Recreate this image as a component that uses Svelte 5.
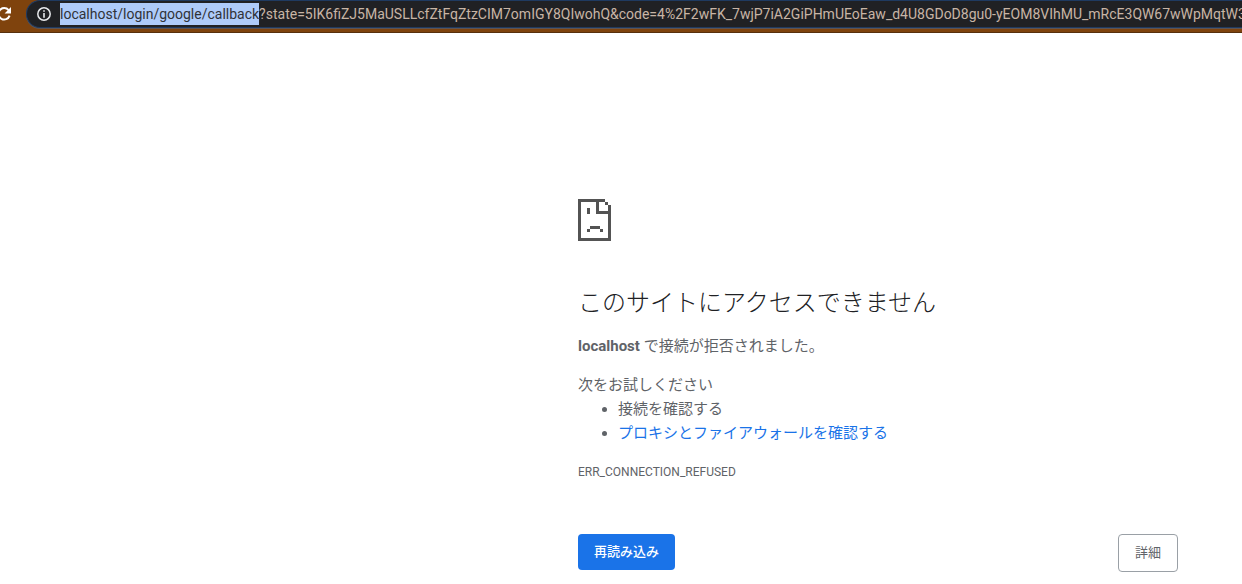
<script>
  import { onMount } from 'svelte';

  const address = 'localhost/login/google/callback';
  const query =
    '?state=5IK6fiZJ5MaUSLLcfZtFqZtzCIM7omIGY8QIwohQ&code=4%2F2wFK_7wjP7iA2GiPHmUEoEaw_d4U8GDoD8gu0-yEOM8VIhMU_mRcE3QW67wWpMqtW3-t';

  let field;

  onMount(() => {
    field.focus({ preventScroll: true });
    field.setSelectionRange(0, address.length, 'backward');
    field.scrollLeft = 0;
  });
</script>

<div class="toolbar">
  <button class="reload" aria-label="再読み込み">
    <svg width="16" height="28" viewBox="0 0 16 28">
      <path d="M12.6 10.2A5.7 5.7 0 1 0 13.6 15.6" fill="none" stroke="#fff" stroke-width="2" />
      <path d="M15 7v6.4H8.6z" fill="#fff" />
    </svg>
  </button>
  <div class="omnibox">
    <svg class="info" width="14" height="14" viewBox="0 0 14 14" aria-hidden="true">
      <circle cx="7" cy="7" r="6.2" fill="none" stroke="#e8eaed" stroke-width="1.5" />
      <path d="M6.2 3.2h1.6v1.6H6.2zM6.2 6.1h1.6v4.6H6.2z" fill="#e8eaed" />
    </svg>
    <input bind:this={field} type="text" aria-label="アドレス" spellcheck="false" value={address + query} />
  </div>
</div>

<main>
  <svg class="sad" width="33" height="42" viewBox="0 0 33 42" shape-rendering="crispEdges" aria-hidden="true">
    <path
      fill="#535353"
      d="M0 0h27v3h-6v9h12v30H0zM3 3v36h27V15H18V3zM27 3h3v3h-3zM30 6h3v6h-3zM9 9h3v6H9zM12 27h10v3H12zM9 30h3v3H9zM22 30h3v3h-3z"
    />
  </svg>
  <h1>このサイトにアクセスできません</h1>
  <p><strong>localhost</strong> で接続が拒否されました。</p>
  <div class="tips">
    <p>次をお試しください</p>
    <ul>
      <li>接続を確認する</li>
      <li><a href="#proxy">プロキシとファイアウォールを確認する</a></li>
    </ul>
  </div>
  <div class="code">ERR_CONNECTION_REFUSED</div>
  <div class="actions">
    <button class="primary">再読み込み</button>
    <button class="secondary">詳細</button>
  </div>
</main>

<style>
  :global(body) {
    margin: 0;
    background: #fff;
    overflow-x: hidden;
  }

  .toolbar {
    display: flex;
    box-sizing: border-box;
    height: 33px;
    background: #7f430d;
    border-bottom: 1px solid #57300d;
    overflow: hidden;
  }

  .reload {
    flex: none;
    width: 26px;
    height: 28px;
    padding: 0;
    border: 0;
    background: none;
    text-align: left;
  }

  .reload svg {
    display: block;
    margin-left: -4px;
  }

  .omnibox {
    flex: 1;
    display: flex;
    align-items: center;
    box-sizing: border-box;
    height: 28px;
    padding-left: 10px;
    gap: 9px;
    background: #202124;
    border: 1px solid #1f3a60;
    border-right: 0;
    border-radius: 14px 0 0 14px;
    box-shadow: 0 1px 0 #5f5553;
  }

  .info {
    flex: none;
  }

  input {
    flex: 1;
    min-width: 0;
    height: 22px;
    padding: 0;
    border: 0;
    outline: 0;
    background: none;
    color: #c8b5a6;
    font: 14px/22px Roboto, 'Noto Sans', sans-serif;
  }

  input::selection {
    background: #aecbfa;
    color: #303238;
  }

  main {
    box-sizing: border-box;
    width: 600px;
    max-width: calc(50% + 43px);
    margin-left: calc(50% - 43px);
    padding-top: 166px;
    color: #5f6368;
    font: 15px/24px Roboto, 'Noto Sans CJK JP', sans-serif;
  }

  .sad {
    display: block;
  }

  h1 {
    margin: 46px 0 15px;
    color: #202124;
    font-size: 24px;
    font-weight: 300;
    line-height: 32px;
  }

  p {
    margin: 0;
  }

  .tips {
    margin-top: 15px;
  }

  ul {
    margin: 0;
    padding-left: 40px;
  }

  a {
    color: #1a73e8;
    text-decoration: none;
  }

  .code {
    margin-top: 17px;
    font-size: 12px;
    line-height: 20px;
  }

  .actions {
    display: flex;
    justify-content: space-between;
    margin-top: 52px;
  }

  .actions button {
    box-sizing: border-box;
    padding: 0 16px;
    border: 0;
    border-radius: 4px;
    font: 13px/20px Roboto, 'Noto Sans CJK JP', sans-serif;
  }

  .actions .primary {
    height: 36px;
    background: #1a73e8;
    color: #fff;
    font-weight: 500;
  }

  .actions .secondary {
    height: 38px;
    background: #fff;
    border: 1px solid #9aa0a6;
    color: #5f6368;
  }
</style>
